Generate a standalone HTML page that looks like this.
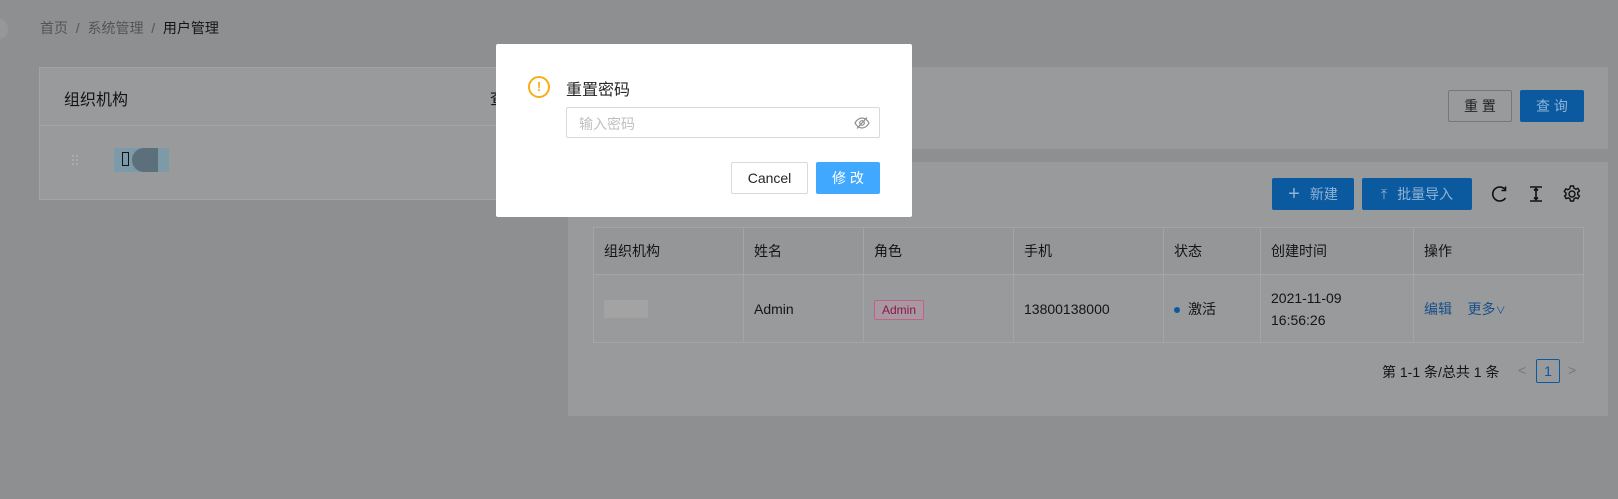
<!DOCTYPE html>
<html><head><meta charset="utf-8"><style>
*{box-sizing:border-box;margin:0;padding:0}
body{width:1618px;height:499px;background:#8e8f90;font-family:"Liberation Sans","Noto Sans CJK SC",sans-serif;font-size:14px;color:#141414;position:relative;overflow:hidden}
.a{position:absolute}
.card{background:#999a9b;border:1px solid #a3a3a3}
.btn{position:absolute;display:flex;align-items:center;justify-content:center;border-radius:2px;font-size:14px}
.pb{background:#0b5aa0;color:#8fb3d6}
td,th{border:1px solid #a5a5a5;text-align:left;font-weight:normal;padding:0 10px}
table{border-collapse:collapse}
</style></head><body>
<div class="a" style="left:-14px;top:18px;width:22px;height:22px;border-radius:50%;background:#979797"></div>
<div class="a" style="left:40px;top:18px;color:#555">首页 &nbsp;/&nbsp; 系统管理 &nbsp;/&nbsp; <span style="color:#141414">用户管理</span></div>

<div class="a card" style="left:39px;top:67px;width:490px;height:133px">
 <div style="height:58px;border-bottom:1px solid #a5a5a5;padding:18px 24px;font-size:16px">组织机构</div>
 <div class="a" style="left:450px;top:17px;font-size:16px">查</div>
 <div class="a" style="left:32px;top:87px;width:6px;height:10px;border-left:2px dotted #aaa;border-right:2px dotted #aaa"></div>
 <div class="a" style="left:74px;top:80px;width:55px;height:24px;background:#7c9aa8"></div>
 <div class="a" style="left:92px;top:80px;width:26px;height:24px;border-radius:12px 0 0 12px;background:#5b707b"></div>
 <div class="a" style="left:82px;top:84px;width:7px;height:14px;border:1.5px solid #111"></div>
</div>

<div class="a card" style="left:568px;top:67px;width:1040px;height:82px;border:none"></div>
<div class="btn" style="left:1448px;top:90px;width:64px;height:32px;border:1px solid #777;color:#222">重 置</div>
<div class="btn pb" style="left:1520px;top:90px;width:64px;height:32px">查 询</div>

<div class="a card" style="left:568px;top:162px;width:1040px;height:254px;border:none"></div>
<div class="btn pb" style="left:1272px;top:178px;width:82px;height:32px"><span style="font-size:20px;margin-right:10px">+</span>新建</div>
<div class="btn pb" style="left:1362px;top:178px;width:110px;height:32px"><span style="margin-right:10px">⤒</span>批量导入</div>
<svg class="a" style="left:1490px;top:184px" width="20" height="20" viewBox="0 0 20 20" fill="none" stroke="#111" stroke-width="1.6"><path d="M15.5 6A7 7 0 1 0 15.5 14"/><path d="M15.5 2.5V6.5H11.5"/></svg>
<svg class="a" style="left:1527px;top:185px" width="18" height="18" viewBox="0 0 18 18" fill="none" stroke="#111" stroke-width="1.6"><path d="M3 2H15M3 16H15M9 4V14M7 5.5L9 3.5 11 5.5M7 12.5L9 14.5 11 12.5"/></svg>
<svg class="a" style="left:1562px;top:184px" width="20" height="20" viewBox="0 0 20 20" fill="none" stroke="#111" stroke-width="1.4"><circle cx="10" cy="10" r="3"/><path d="M8.5 2h3l.5 2.2 1.8 1 2.1-.8 1.5 2.6-1.7 1.5v2l1.7 1.5-1.5 2.6-2.1-.8-1.8 1-.5 2.2h-3l-.5-2.2-1.8-1-2.1.8-1.5-2.6L4 11V9L2.3 7.5l1.5-2.6 2.1.8 1.8-1z"/></svg>

<table class="a" style="left:593px;top:227px;width:991px">
<tr style="height:47px;background:#959697"><th style="width:150px">组织机构</th><th style="width:120px">姓名</th><th style="width:150px">角色</th><th style="width:150px">手机</th><th style="width:97px">状态</th><th style="width:153px">创建时间</th><th>操作</th></tr>
<tr style="height:68px"><td><div style="width:44px;height:18px;background:#a3a3a3"></div></td><td>Admin</td><td><span style="border:1px solid #c0608c;color:#8a1652;background:#a898a0;padding:2px 7px;font-size:12px;border-radius:2px">Admin</span></td><td>13800138000</td><td><span style="display:inline-block;width:6px;height:6px;border-radius:50%;background:#0b5aa0;margin-right:8px;vertical-align:middle"></span>激活</td><td style="line-height:22px">2021-11-09<br>16:56:26</td><td style="color:#17508a">编辑 &nbsp;&nbsp;&nbsp;更多<span style="font-size:10px">∨</span></td></tr>
</table>
<div class="a" style="left:1382px;top:362px">第 1-1 条/总共 1 条</div>
<div class="a" style="left:1518px;top:362px;color:#777">&lt;</div>
<div class="btn" style="left:1536px;top:359px;width:24px;height:24px;border:1px solid #0b5aa0;color:#0b5aa0">1</div>
<div class="a" style="left:1568px;top:362px;color:#777">&gt;</div>

<div class="a" style="left:496px;top:44px;width:416px;height:173px;background:#fff;border-radius:2px">
 <div class="a" style="left:32px;top:32px;width:22px;height:22px;border:2px solid #faad14;border-radius:50%;color:#faad14;font-size:13px;font-weight:bold;text-align:center;line-height:18px">!</div>
 <div class="a" style="left:70px;top:32px;font-size:16px;color:#262626">重置密码</div>
 <div class="a" style="left:70px;top:63px;width:314px;height:31px;border:1px solid #d9d9d9;border-radius:2px;padding:6px 12px;color:#bfbfbf">输入密码</div>
 <svg class="a" style="left:358px;top:72px" width="16" height="14" viewBox="0 0 16 14" fill="none" stroke="#8c8c8c" stroke-width="1.2"><path d="M1 7C3 3.5 5.5 2 8 2s5 1.5 7 5c-2 3.5-4.5 5-7 5S3 10.5 1 7z"/><circle cx="8" cy="7" r="2.3"/><path d="M3 12.5L13 1.5"/></svg>
 <div class="btn" style="left:235px;top:118px;width:77px;height:32px;border:1px solid #d9d9d9;color:#262626">Cancel</div>
 <div class="btn" style="left:320px;top:118px;width:64px;height:32px;background:#40a9ff;color:#fff">修 改</div>
</div>
</body></html>
